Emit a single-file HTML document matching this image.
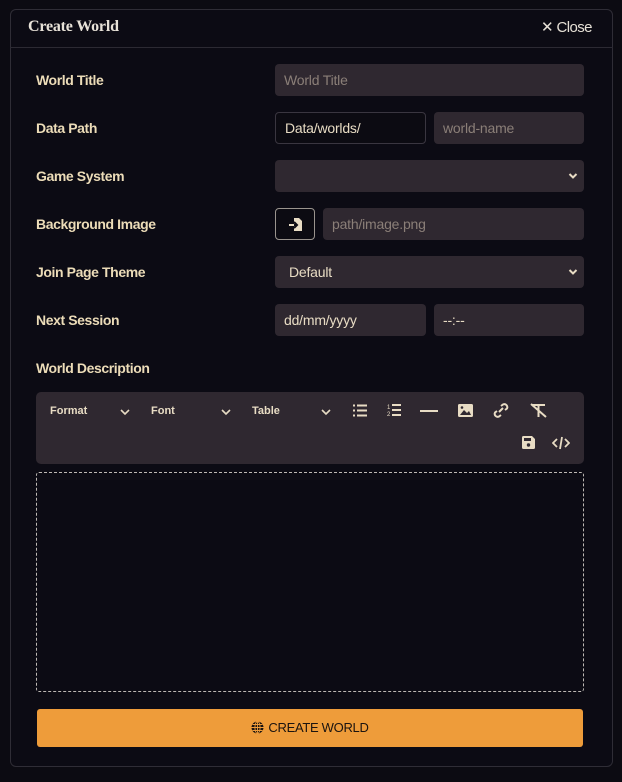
<!DOCTYPE html>
<html><head><meta charset="utf-8"><style>
*{box-sizing:border-box;margin:0;padding:0}
body{width:622px;height:782px;background:#0c0b12;font-family:"Liberation Sans",sans-serif;color:#e8dcc4;position:relative;overflow:hidden}
.panel{position:absolute;left:10px;top:9px;width:603px;height:758px;border:1px solid #2f2d36;border-radius:6px;background:#0c0b14}
.hdr{position:absolute;left:10px;top:9px;width:603px;height:39px;border-bottom:1px solid #2c2a33}
.title{position:absolute;left:28px;top:18px;font-family:"Liberation Serif",serif;font-weight:bold;font-size:16px;color:#e8e2d8;letter-spacing:-0.2px}
.close{position:absolute;left:541px;top:18px;font-size:15px;color:#e6e0d6;letter-spacing:-0.6px}
.lbl{position:absolute;left:36px;font-weight:bold;font-size:14px;color:#ecdcb8;letter-spacing:-0.4px}
.in{position:absolute;height:32px;background:#2f2830;border-radius:4px;font-size:14px;line-height:32px;padding-left:9px;color:#8b7f78;letter-spacing:-0.2px}
.dk{background:#0c0b12;border:1px solid #3a3640;color:#e8dcc4;line-height:30px}
.val{color:#e8dcc4}
.chev{position:absolute;right:6px;top:11px}
.tb{position:absolute;left:36px;top:392px;width:548px;height:72px;background:#2f2830;border-radius:5px}
.tbt{position:absolute;top:13px;font-size:11px;font-weight:bold;color:#e8dcc4}
.ed{position:absolute;left:36px;top:472px;width:548px;height:220px;border:1px dashed #bdb8b4;border-radius:3px}
.btn{position:absolute;left:37px;top:709px;width:546px;height:38px;background:#ee9c3a;border-radius:3px;text-align:center;line-height:38px;font-size:13px;color:#1b1410;letter-spacing:-0.3px}
</style></head><body>
<div class="panel"></div>
<div class="hdr"></div>
<div class="title">Create World</div>
<div class="close">✕ Close</div>

<div class="lbl" style="top:72px">World Title</div>
<div class="in" style="left:275px;top:64px;width:309px">World Title</div>

<div class="lbl" style="top:120px">Data Path</div>
<div class="in dk" style="left:275px;top:112px;width:151px">Data/worlds/</div>
<div class="in" style="left:434px;top:112px;width:150px">world-name</div>

<div class="lbl" style="top:168px">Game System</div>
<div class="in" style="left:275px;top:160px;width:309px"><svg class="chev" width="10" height="10" viewBox="0 0 10 10"><path d="M1.5 3l3.5 3.5L8.5 3" stroke="#e8dcc4" stroke-width="2" fill="none"/></svg></div>

<div class="lbl" style="top:216px">Background Image</div>
<div class="in dk" style="left:275px;top:208px;width:40px;border-color:#9a948e;padding:0"><svg style="position:absolute;left:12px;top:8px" width="16" height="15" viewBox="0 0 16 15"><path d="M6 1h5l3 3v10H6z" fill="#e8dcc4"/><path d="M1 8h8M6 5l3 3-3 3" stroke="#0c0b12" stroke-width="2" fill="none"/><path d="M1 8h5" stroke="#e8dcc4" stroke-width="2"/></svg></div>
<div class="in" style="left:323px;top:208px;width:261px">path/image.png</div>

<div class="lbl" style="top:264px">Join Page Theme</div>
<div class="in val" style="left:275px;top:256px;width:309px;padding-left:14px">Default<svg class="chev" width="10" height="10" viewBox="0 0 10 10"><path d="M1.5 3l3.5 3.5L8.5 3" stroke="#e8dcc4" stroke-width="2" fill="none"/></svg></div>

<div class="lbl" style="top:312px">Next Session</div>
<div class="in val" style="left:275px;top:304px;width:151px">dd/mm/yyyy</div>
<div class="in val" style="left:434px;top:304px;width:150px">--:--</div>

<div class="lbl" style="top:360px">World Description</div>
<div class="tb">
<div class="tbt" style="left:14px">Format</div>
<svg style="position:absolute;left:84px;top:16px" width="10" height="8" viewBox="0 0 10 8"><path d="M1 2l4 4 4-4" stroke="#e8dcc4" stroke-width="1.6" fill="none"/></svg>
<div class="tbt" style="left:115px">Font</div>
<svg style="position:absolute;left:185px;top:16px" width="10" height="8" viewBox="0 0 10 8"><path d="M1 2l4 4 4-4" stroke="#e8dcc4" stroke-width="1.6" fill="none"/></svg>
<div class="tbt" style="left:216px">Table</div>
<svg style="position:absolute;left:285px;top:16px" width="10" height="8" viewBox="0 0 10 8"><path d="M1 2l4 4 4-4" stroke="#e8dcc4" stroke-width="1.6" fill="none"/></svg>
<svg style="position:absolute;left:317px;top:12px" width="14" height="13" viewBox="0 0 14 13"><path d="M0 1.5h2M4 1.5h10M0 6.5h2M4 6.5h10M0 11.5h2M4 11.5h10" stroke="#e8dcc4" stroke-width="2"/></svg>
<svg style="position:absolute;left:351px;top:11px" width="14" height="14" viewBox="0 0 14 14"><text x="0" y="6" font-size="6" fill="#e8dcc4" font-family="Liberation Sans">1</text><text x="0" y="13" font-size="6" fill="#e8dcc4" font-family="Liberation Sans">2</text><path d="M5 2h9M5 7h9M5 12h9" stroke="#e8dcc4" stroke-width="2"/></svg>
<svg style="position:absolute;left:384px;top:18px" width="18" height="3"><rect width="18" height="2" fill="#e8dcc4"/></svg>
<svg style="position:absolute;left:422px;top:12px" width="15" height="13" viewBox="0 0 15 13"><rect width="15" height="13" rx="1.5" fill="#e8dcc4"/><path d="M2 11l4-5 3 3 2-2 2 4z" fill="#2f2830"/><circle cx="4" cy="3.5" r="1.3" fill="#2f2830"/></svg>
<svg style="position:absolute;left:456px;top:11px" width="18" height="15" viewBox="0 0 18 15"><path d="M7 9l4-4M9 3l2-1.5a3 3 0 0 1 4 4L13 7M9 12l-2 1.5a3 3 0 0 1-4-4L5 8" stroke="#e8dcc4" stroke-width="2" fill="none"/></svg>
<svg style="position:absolute;left:494px;top:11px" width="18" height="15" viewBox="0 0 18 15"><path d="M2 2h13M8.5 2v12M1 1l15 13" stroke="#e8dcc4" stroke-width="2" fill="none"/></svg>
<svg style="position:absolute;left:486px;top:44px" width="13" height="13" viewBox="0 0 13 13"><path d="M0 1.5a1.5 1.5 0 0 1 1.5-1.5H10l3 3v8.5a1.5 1.5 0 0 1-1.5 1.5h-10A1.5 1.5 0 0 1 0 11.5z" fill="#e8dcc4"/><rect x="2" y="2" width="7" height="3" fill="#2f2830"/><circle cx="6.5" cy="9" r="1.7" fill="#2f2830"/></svg>
<svg style="position:absolute;left:516px;top:44px" width="18" height="14" viewBox="0 0 18 14"><path d="M5 3L1 7l4 4M13 3l4 4-4 4M10 1L8 13" stroke="#e8dcc4" stroke-width="1.8" fill="none"/></svg>
</div>
<div class="ed"></div>
<div class="btn"><svg style="vertical-align:-2px;margin-right:4px" width="13" height="13" viewBox="0 0 13 13"><circle cx="6.5" cy="6.5" r="6" fill="#1b1410"/><path d="M0.5 6.5h12M6.5 0.5v12M1.5 3.5h10M1.5 9.5h10" stroke="#ee9c3a" stroke-width="0.9"/><ellipse cx="6.5" cy="6.5" rx="2.6" ry="6" stroke="#ee9c3a" stroke-width="0.9" fill="none"/></svg>CREATE WORLD</div>
</body></html>
